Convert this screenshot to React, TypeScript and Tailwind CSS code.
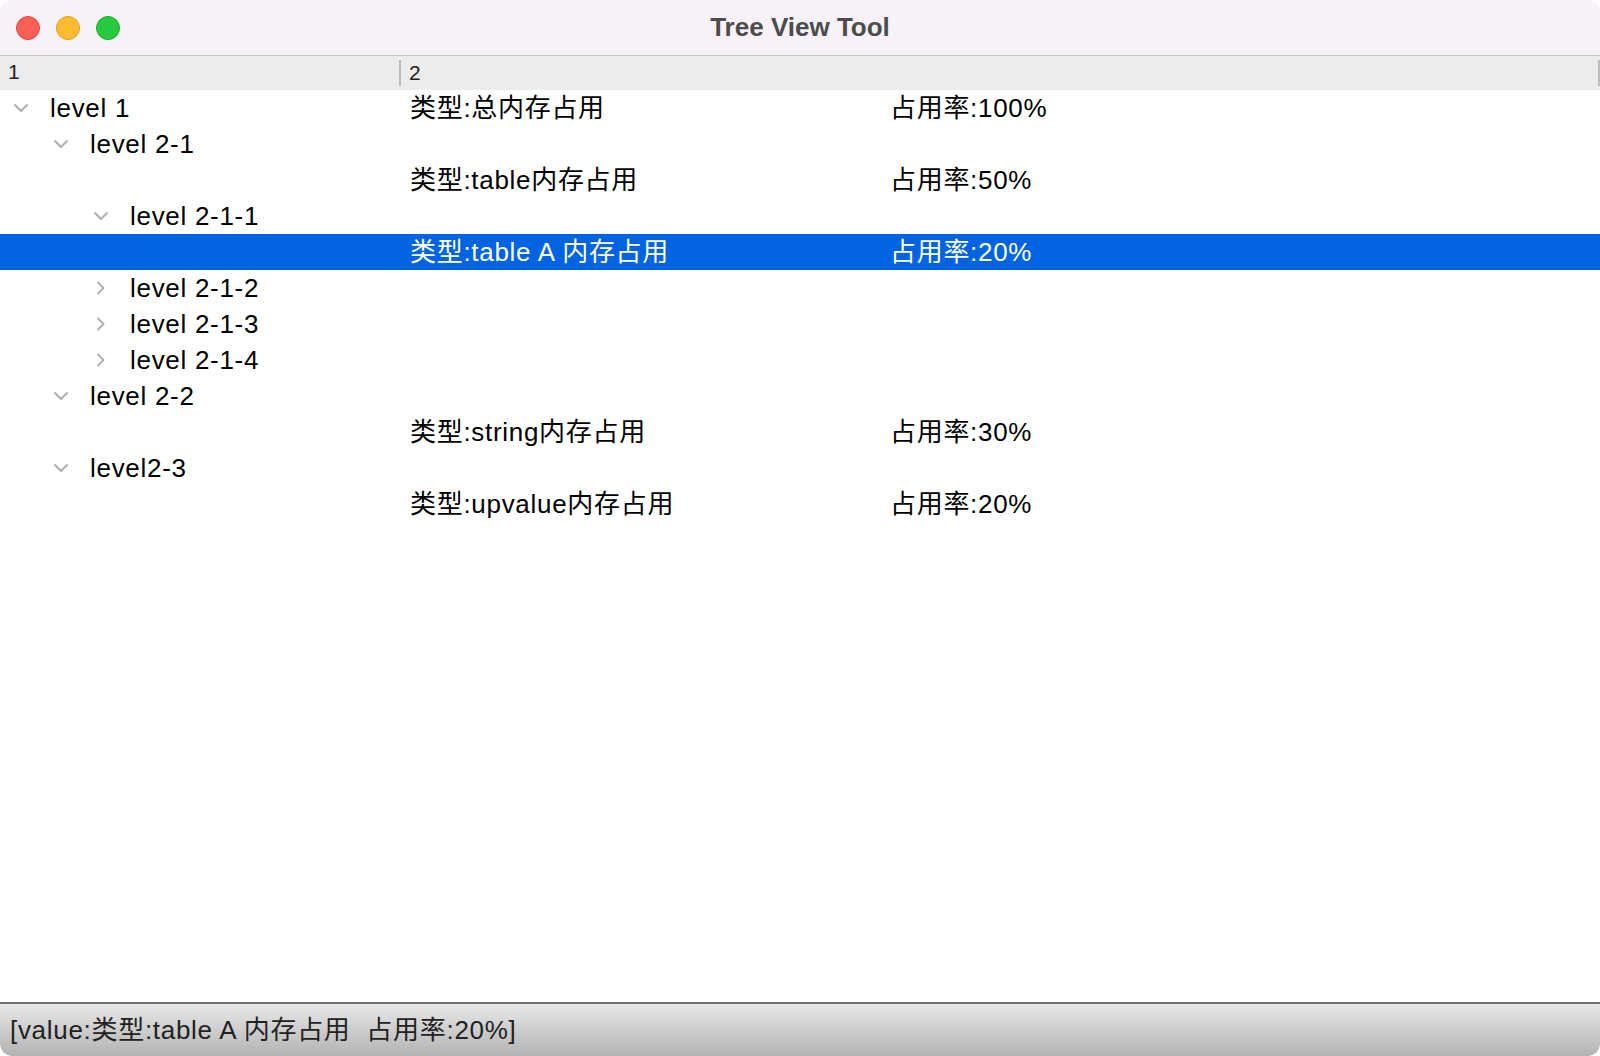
import React from "react"

type Row = {
  label: string
  depth: number
  arrow?: "down" | "right"
  type?: string
  rate?: string
  selected?: boolean
}

const rows: Row[] = [
  { label: "level 1", depth: 0, arrow: "down", type: "类型:总内存占用", rate: "占用率:100%" },
  { label: "level 2-1", depth: 1, arrow: "down" },
  { label: "", depth: 2, type: "类型:table内存占用", rate: "占用率:50%" },
  { label: "level 2-1-1", depth: 2, arrow: "down" },
  { label: "", depth: 3, type: "类型:table A 内存占用", rate: "占用率:20%", selected: true },
  { label: "level 2-1-2", depth: 2, arrow: "right" },
  { label: "level 2-1-3", depth: 2, arrow: "right" },
  { label: "level 2-1-4", depth: 2, arrow: "right" },
  { label: "level 2-2", depth: 1, arrow: "down" },
  { label: "", depth: 2, type: "类型:string内存占用", rate: "占用率:30%" },
  { label: "level2-3", depth: 1, arrow: "down" },
  { label: "", depth: 2, type: "类型:upvalue内存占用", rate: "占用率:20%" },
]

const font = { fontFamily: '"Liberation Sans", "Noto Sans CJK SC", sans-serif' }

function Chevron({ dir }: { dir: "down" | "right" }) {
  return (
    <svg width="16" height="16" viewBox="0 0 16 16" fill="none" stroke="#b0b0b0" strokeWidth="2" strokeLinecap="round" strokeLinejoin="round">
      {dir === "down" ? <path d="M2 5 L8 11 L14 5" /> : <path d="M5 2.5 L10.5 8 L5 13.5" />}
    </svg>
  )
}

// indent per depth
const pad = ["pl-[13px]", "pl-[53px]", "pl-[93px]", "pl-[133px]"]

export default function App() {
  return (
    <div className="w-[1600px] h-[1056px] bg-white flex flex-col overflow-hidden rounded-[12px] text-black" style={font}>
      {/* TITLE BAR */}
      <div className="h-[56px] shrink-0 bg-[#f7f2f7] border-b border-[#c8c8c8] flex items-center relative">
        <div className="flex items-center gap-[16px] pl-[16px]">
          <span className="w-[24px] h-[24px] rounded-full bg-[#fe5f57] border border-[#e14640]" />
          <span className="w-[24px] h-[24px] rounded-full bg-[#febc2e] border border-[#dfa023]" />
          <span className="w-[24px] h-[24px] rounded-full bg-[#28c840] border border-[#1aab29]" />
        </div>
        <div className="absolute inset-0 flex items-center justify-center text-[26px] font-bold text-[#4c4c4c] pointer-events-none">
          Tree View Tool
        </div>
      </div>

      {/* HEADER */}
      <div className="h-[34px] shrink-0 bg-[#ececec] flex text-[21px] text-[#222]">
        <div className="w-[399px] flex items-center pl-[8px] -mt-[2px]">1</div>
        <div className="flex-1 flex items-center border-l-2 border-[#bcbcbc] my-[4px] pl-[8px]">2</div>
        <div className="w-[2px] bg-[#bcbcbc] my-[4px]" />
      </div>

      {/* TREE */}
      <div className="flex-1 text-[26px] tracking-[0.7px]">
        {rows.map((r, i) => (
          <div
            key={i}
            className={`h-[36px] flex items-center ${r.selected ? "bg-[#0063e1] text-white" : ""}`}
          >
            <div className={`w-[399px] flex items-center ${pad[r.depth]}`}>
              <div className="w-[16px] h-[16px] mr-[21px]">{r.arrow && <Chevron dir={r.arrow} />}</div>
              <span>{r.label}</span>
            </div>
            <div className="flex-1 flex items-center pl-[11px]">
              <span className="w-[480px]">{r.type}</span>
              <span>{r.rate}</span>
            </div>
          </div>
        ))}
      </div>

      {/* STATUS BAR */}
      <div className="h-[54px] shrink-0 border-t-2 border-[#707070] bg-gradient-to-b from-[#e8e8e8] to-[#b3b3b3] rounded-b-[12px] flex items-center pl-[10px] text-[26px] tracking-[0.7px] text-[#222]">
        [value:类型:table A 内存占用&nbsp;&nbsp;占用率:20%]
      </div>
    </div>
  )
}
